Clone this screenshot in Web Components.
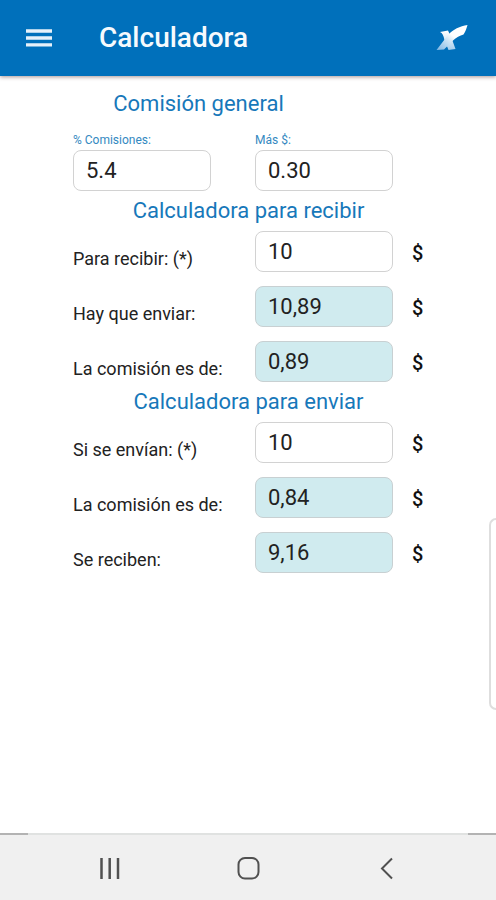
<!DOCTYPE html>
<html lang="es">
<head>
<meta charset="utf-8">
<meta name="viewport" content="width=device-width, initial-scale=1">
<title>Calculadora</title>
<style>
  body {
    margin: 0;
    background: #fff;
    color: #222;
    font-family: Roboto, "Liberation Sans", sans-serif;
  }
</style>
</head>
<body>
<calc-app></calc-app>

<script>
(function() {
  function define(name, html, setup) {
    const tmpl = document.createElement('template');
    tmpl.innerHTML = html;

    customElements.define(name, class extends HTMLElement {
      constructor() {
        super();
        this.attachShadow({ mode: 'open' }).appendChild(tmpl.content.cloneNode(true));
      }

      connectedCallback() {
        if (setup) setup(this, this.shadowRoot);
      }
    });
  }

  define('app-bar', `
    <style>
      :host {
        display: block;
        background: #0070bb;
        color: #f6fafd;
        box-shadow: 0 1px 4px rgba(60, 20, 20, 0.45);
      }
      header {
        display: flex;
        align-items: center;
        height: 76px;
        padding: 0 24px;
        box-sizing: border-box;
      }
      button {
        display: flex;
        padding: 0;
        border: 0;
        background: none;
        color: inherit;
        cursor: pointer;
      }
      h1 {
        flex: 1;
        margin: 0 0 0 45px;
        font-size: 28px;
        line-height: 32px;
        font-weight: 500;
      }
    </style>
    <header>
      <button type="button" aria-label="Menú">
        <svg width="30" height="24" viewBox="0 0 30 24" fill="#e6f1fa">
          <path d="M2 3.300h26v3.400H2zM2 10.300h26v3.400H2zM2 17.300h26v3.200H2z"/>
        </svg>
      </button>
      <h1><slot></slot></h1>
      <button type="button" aria-label="Inicio">
        <svg width="36" height="28" viewBox="0 0 36 28">
          <defs>
            <linearGradient id="wing" x1="0" y1="1" x2="1" y2="0">
              <stop offset="0" stop-color="#7db6e4"/>
              <stop offset="0.4" stop-color="#d3e7f6"/>
              <stop offset="0.55" stop-color="#fff"/>
            </linearGradient>
            <linearGradient id="leg" x1="0" y1="0" x2="0" y2="1">
              <stop offset="0" stop-color="#fff"/>
              <stop offset="0.5" stop-color="#d8eaf8"/>
              <stop offset="1" stop-color="#a5cdec"/>
            </linearGradient>
          </defs>
          <path d="M4 8L12 6.500L15.500 14L19.500 25L12.500 26L8.500 16C7.500 11.500 6.500 9 4 8Z" fill="url(#leg)"/>
          <path d="M0.500 26L8 25.500L17 16.500C20 13.500 24 11.500 27.500 10.500C29.500 7.500 30.500 4.500 31.500 1C24 2 17 5.500 12 11Z" fill="url(#wing)"/>
        </svg>
      </button>
    </header>
  `);

  // Text box used by every row, with its label either above or beside it
  const fieldStyles = `
    label {
      color: #222;
    }
    input {
      width: 100%;
      height: 41px;
      box-sizing: border-box;
      padding: 0 12px;
      border: 1px solid #d2d2d2;
      border-radius: 8px;
      background: #fff;
      color: #222;
      font: 22px/26px Roboto, "Liberation Sans", sans-serif;
      outline-color: #0070bb;
    }
    input:read-only {
      background: #d0ebef;
      border-color: #c8d0d2;
    }
  `;

  function bindInput(host, root) {
    const input = root.querySelector('input');
    input.value = host.getAttribute('value') || '';
    input.readOnly = host.hasAttribute('readonly');
  }

  define('stacked-field', `
    <style>
      :host {
        display: block;
      }
      ${fieldStyles}
      label {
        display: block;
        font-size: 12px;
        line-height: 20px;
        color: #3489c1;
      }
      input {
        display: block;
      }
    </style>
    <label for="field"><slot></slot></label>
    <input id="field" type="text" inputmode="decimal">
  `, bindInput);

  define('amount-row', `
    <style>
      :host {
        display: grid;
        grid-template-columns: 1fr 44px 1fr 19px 12px;
        align-items: center;
      }
      ${fieldStyles}
      label {
        grid-column: span 2;
        padding-top: 14px;
        font-size: 18px;
        line-height: 24px;
        white-space: nowrap;
      }
      .unit {
        grid-column: 5;
        padding-top: 2px;
        font-size: 20px;
        line-height: 24px;
        font-weight: 500;
        color: #111;
      }
    </style>
    <label for="amount"><slot></slot></label>
    <input id="amount" type="text" inputmode="decimal">
    <span class="unit">$</span>
  `, bindInput);

  define('calc-section', `
    <style>
      :host {
        display: block;
      }
      h2 {
        margin: 0;
        font-size: 22px;
        line-height: 40px;
        font-weight: 400;
        color: #1778ba;
        text-align: center;
        white-space: nowrap;
      }
      .rows {
        display: grid;
        gap: 14px;
      }
    </style>
    <h2><slot name="title"></slot></h2>
    <div class="rows"><slot></slot></div>
  `);

  define('fee-settings', `
    <style>
      :host {
        display: block;
      }
      h2 {
        margin: 0 100px 0 0;
        font-size: 22px;
        line-height: 40px;
        font-weight: 400;
        color: #1778ba;
        text-align: center;
      }
      .fields {
        display: grid;
        grid-template-columns: 1fr 1fr;
        column-gap: 44px;
        margin-right: 31px;
        padding-top: 6px;
      }
    </style>
    <h2>Comisión general</h2>
    <div class="fields"><slot></slot></div>
  `);

  define('edge-panel', `
    <style>
      :host {
        display: block;
        position: absolute;
        top: 518px;
        right: 0;
        width: 7px;
        height: 192px;
        box-sizing: border-box;
        border: 2px solid #dedede;
        border-right: 0;
        border-radius: 8px 0 0 8px;
        background: #fff;
      }
    </style>
  `);

  define('system-nav', `
    <style>
      :host {
        display: block;
        background: #f0f0f0;
      }
      /* thin rule with darker ends */
      .rule {
        height: 2px;
        border: solid #b3b3b3;
        border-width: 0 28px;
        background: #e0e2e1;
      }
      nav {
        display: flex;
        justify-content: center;
        gap: 111px;
        padding: 19px 0 18px;
      }
      button {
        display: flex;
        padding: 0;
        border: 0;
        background: none;
        cursor: pointer;
      }
      svg {
        fill: none;
        stroke: #505050;
        stroke-width: 2;
      }
    </style>
    <div class="rule"></div>
    <nav>
      <button type="button" aria-label="Recientes">
        <svg width="28" height="28" viewBox="0 0 28 28"><path d="M6.500 4v21M14.700 4v21M23 4v21" stroke-width="2.500"/></svg>
      </button>
      <button type="button" aria-label="Inicio">
        <svg width="28" height="28" viewBox="0 0 28 28"><rect x="4.500" y="4" width="20" height="20.500" rx="6.500"/></svg>
      </button>
      <button type="button" aria-label="Atrás">
        <svg width="28" height="28" viewBox="0 0 28 28"><path d="M19 4.500L9 14.500L19 24.500"/></svg>
      </button>
    </nav>
  `);

  define('calc-app', `
    <style>
      :host {
        display: flex;
        flex-direction: column;
        min-height: 100vh;
        position: relative;
      }
      main {
        flex: 1;
        padding: 8px 72px 24px 73px;
      }
    </style>
    <app-bar>Calculadora</app-bar>
    <main>
      <fee-settings>
        <stacked-field id="percent" value="5.4">% Comisiones:</stacked-field>
        <stacked-field id="fixed" value="0.30">Más $:</stacked-field>
      </fee-settings>
      <calc-section>
        <span slot="title">Calculadora para recibir</span>
        <amount-row id="receive" value="10">Para recibir: (*)</amount-row>
        <amount-row id="toSend" value="10,89" readonly>Hay que enviar:</amount-row>
        <amount-row id="receiveFee" value="0,89" readonly>La comisión es de:</amount-row>
      </calc-section>
      <calc-section>
        <span slot="title">Calculadora para enviar</span>
        <amount-row id="send" value="10">Si se envían: (*)</amount-row>
        <amount-row id="sendFee" value="0,84" readonly>La comisión es de:</amount-row>
        <amount-row id="received" value="9,16" readonly>Se reciben:</amount-row>
      </calc-section>
    </main>
    <edge-panel></edge-panel>
    <system-nav></system-nav>
  `, (host, root) => {
    const input = id => root.getElementById(id).shadowRoot.querySelector('input');
    const read = id => parseFloat(input(id).value.replace(',', '.')) || 0;
    const write = (id, n) => {
      input(id).value = n.toFixed(2).replace('.', ',');
    };

    root.addEventListener('input', () => {
      const rate = read('percent') / 100;
      const fixed = read('fixed');

      const total = (read('receive') + fixed) / (1 - rate);
      write('toSend', total);
      write('receiveFee', total - read('receive'));

      const fee = read('send') * rate + fixed;
      write('sendFee', fee);
      write('received', read('send') - fee);
    });
  });
})();
</script>
</body>
</html>
